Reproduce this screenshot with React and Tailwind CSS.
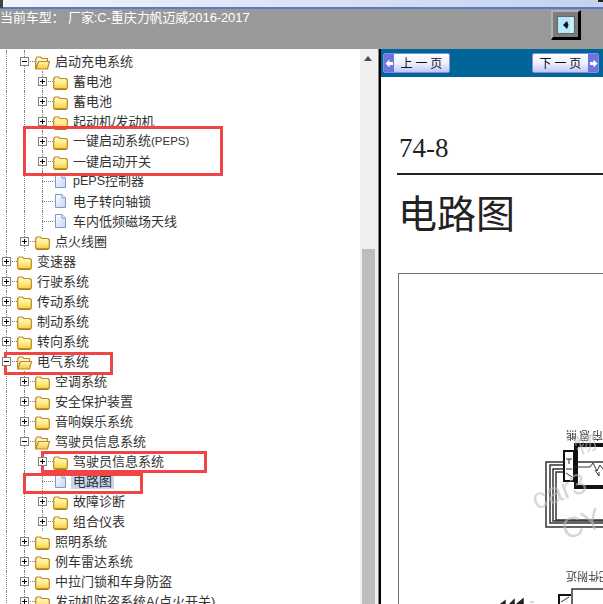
import React from "react";

const cjk = "font-['Liberation_Sans','Noto_Sans_CJK_SC',sans-serif]";

const rows = [
    { level: 1, kind: "doc", text: "" },
    { level: 1, kind: "open", text: "启动充电系统" },
    { level: 2, kind: "closed", text: "蓄电池" },
    { level: 2, kind: "closed", text: "蓄电池" },
    { level: 2, kind: "closed", text: "起动机/发动机" },
    { level: 2, kind: "closed", text: "一键启动系统", small: "(PEPS)" },
    { level: 2, kind: "closed", text: "一键启动开关" },
    { level: 2, kind: "doc", lead: "pEPS", text: "控制器" },
    { level: 2, kind: "doc", text: "电子转向轴锁" },
    { level: 2, kind: "doc", text: "车内低频磁场天线" },
    { level: 1, kind: "closed", text: "点火线圈" },
    { level: 0, kind: "closed", text: "变速器" },
    { level: 0, kind: "closed", text: "行驶系统" },
    { level: 0, kind: "closed", text: "传动系统" },
    { level: 0, kind: "closed", text: "制动系统" },
    { level: 0, kind: "closed", text: "转向系统" },
    { level: 0, kind: "open", text: "电气系统" },
    { level: 1, kind: "closed", text: "空调系统" },
    { level: 1, kind: "closed", text: "安全保护装置" },
    { level: 1, kind: "closed", text: "音响娱乐系统" },
    { level: 1, kind: "open", text: "驾驶员信息系统" },
    { level: 2, kind: "closed", text: "驾驶员信息系统" },
    { level: 2, kind: "doc", text: "电路图", selected: true },
    { level: 2, kind: "closed", text: "故障诊断" },
    { level: 2, kind: "closed", text: "组合仪表" },
    { level: 1, kind: "closed", text: "照明系统" },
    { level: 1, kind: "closed", text: "例车雷达系统" },
    { level: 1, kind: "closed", text: "中拉门锁和车身防盗" },
    { level: 1, kind: "closed", text: "发动机防盗系统A(点火开关)" },
];

function FolderClosed() {
    return (
        <svg width="15" height="14" viewBox="0 0 15 14" className="mt-[3px] shrink-0">
            <defs>
                <linearGradient id="fc" x1="0" y1="0" x2="0" y2="1">
                    <stop offset="0" stopColor="#fff9cf" />
                    <stop offset="0.5" stopColor="#ffeb8a" />
                    <stop offset="1" stopColor="#f8c83c" />
                </linearGradient>
            </defs>
            <path d="M0.7 2.5 L2 1 H5.5 L7 2.5 H13 L14.3 3.8 V12 L13 13.3 H2 L0.7 12 Z" fill="url(#fc)" stroke="#bd8a1c" strokeWidth="1.2" />
            <path d="M2 13 H13" stroke="#9c6f10" />
        </svg>
    );
}

function FolderOpen() {
    return (
        <svg width="15" height="14" viewBox="0 0 15 14" className="mt-[3px] shrink-0">
            <defs>
                <linearGradient id="fo" x1="0" y1="0" x2="0" y2="1">
                    <stop offset="0" stopColor="#fff6c0" />
                    <stop offset="1" stopColor="#f8c83c" />
                </linearGradient>
            </defs>
            <path d="M0.7 3 L2 1 H5.5 L7 2.5 H12.5 V6 H4 L0.7 12.5 Z" fill="#fbf3d0" stroke="#bd8a1c" strokeWidth="1.2" />
            <path d="M0.7 13 L3.5 5.5 H14.5 L12.5 13 Z" fill="url(#fo)" stroke="#bd8a1c" strokeWidth="1.2" />
        </svg>
    );
}

function DocIcon() {
    return (
        <svg width="15" height="16" viewBox="0 0 15 16" className="shrink-0">
            <defs>
                <linearGradient id="dc" x1="0" y1="0" x2="1" y2="1">
                    <stop offset="0" stopColor="#ffffff" />
                    <stop offset="1" stopColor="#c4d4f2" />
                </linearGradient>
            </defs>
            <path d="M2.5 1.5 H9 L12.5 5 V14.5 H2.5 Z" fill="url(#dc)" stroke="#7f9ad0" />
            <path d="M9 1.5 V5 H12.5" fill="#e8eefa" stroke="#7f9ad0" />
        </svg>
    );
}

function Expander({ open }) {
    return (
        <span className="relative z-10 flex h-[9px] w-[9px] items-center justify-center border border-[#808080] bg-white">
            <span className="absolute h-px w-[5px] bg-black" />
            {!open && <span className="absolute h-[5px] w-px bg-black" />}
        </span>
    );
}

function Guide() {
    return (
        <span className="relative h-5 w-[18px] shrink-0">
            <span className="absolute bottom-0 left-[9px] top-0 border-l border-dotted border-[#808080]" />
        </span>
    );
}

function TreeRow({ row }) {
    const guides = [];
    for (let i = 0; i < row.level; i++) guides.push(<Guide key={i} />);

    return (
        <div className="flex h-5 shrink-0 items-center whitespace-nowrap">
            {guides}
            <span className="relative flex h-5 w-[18px] shrink-0 items-center justify-center pl-px">
                <span className="absolute bottom-0 left-[9px] top-0 border-l border-dotted border-[#808080]" />
                <span className="absolute left-[9px] right-[-2px] top-[10px] border-t border-dotted border-[#808080]" />
                {row.kind !== "doc" && <Expander open={row.kind === "open"} />}
            </span>
            <span className="ml-[2px] flex w-[15px] shrink-0 justify-center">
                {row.kind === "closed" && <FolderClosed />}
                {row.kind === "open" && <FolderOpen />}
                {row.kind === "doc" && <DocIcon />}
            </span>
            <span className={`ml-[3px] px-[2px] text-[13px] leading-[15px] text-[#333] ${row.selected ? "bg-[#c8d6ee]" : ""}`}>
                {row.lead && <span className="text-[12.5px]">{row.lead}</span>}
                {row.text}
                {row.small && <span className="text-[11.5px]">{row.small}</span>}
            </span>
        </div>
    );
}

function PageButton({ text, next }) {
    return (
        <button className={`flex h-5 w-[67px] items-center rounded-[2px] border border-[#8a8ae0] bg-gradient-to-b from-white via-[#eef0ff] to-[#c4c8f4] text-[12px] text-[#111] ${next ? "flex-row-reverse" : ""}`}>
            <span className="flex h-full w-[10px] shrink-0 items-center justify-center bg-[#6d74e0]">
                <svg width="9" height="9" viewBox="0 0 9 9">
                    <path d={next ? "M1 3 H4.5 V0.5 L8.5 4.5 L4.5 8.5 V6 H1 Z" : "M8 3 H4.5 V0.5 L0.5 4.5 L4.5 8.5 V6 H8 Z"} fill="white" />
                </svg>
            </span>
            <span className="flex-1 text-center font-['Noto_Sans_CJK_SC',sans-serif] tracking-[0.1px]">{text}</span>
        </button>
    );
}

function Diagram() {
    return (
        <svg className="absolute left-0 top-0 blur-[0.4px]" width="205" height="331" viewBox="398 273 205 331">
            <g fill="none" stroke="#333">
                <path d="M603 462 H546 V527 H603" strokeWidth="1.5" />
                <path d="M563 465 H550 V523 H603" strokeWidth="1.5" />
                <path d="M563 469 H553 V521 H603" strokeWidth="1.5" />
                <path d="M563 472 H556 V520 H603" strokeWidth="1.5" />
                <rect x="564" y="451" width="10" height="30" fill="white" strokeWidth="2" stroke="#111" />
                <path d="M603 445 H576 V487 H603" strokeWidth="4" stroke="#111" />
                <path d="M574 467 H590 L593 463 L597 471 L600 465 L603 469" strokeWidth="1" />
                <path d="M595 470 L599 476 M599 476 V472" strokeWidth="1" />
                <path d="M566 459 H572 M569 459 V464 M566 469 H572 M566 473 L572 477" strokeWidth="1" />
                <path d="M603 589 H572 V604" strokeWidth="1.5" />
                <path d="M559 604 V595 H571" strokeWidth="2" stroke="#111" />
                <path d="M561 602 L569 597" strokeWidth="1" />
            </g>
            <path d="M501 604 L505 601 V604 Z M510 604 L514 600 V604 Z M517 604 L523 599 V604 Z" fill="#222" stroke="#222" strokeWidth="1.5" />
            <path d="M530 602 H534" stroke="#aaa" />
            <g className="font-['Noto_Sans_CJK_SC',sans-serif]" fill="#333" fontSize="11">
                <text x="0" y="0" transform="translate(603 431) rotate(180)" letterSpacing="2">帘恩熊</text>
                <text x="0" y="0" transform="translate(610 572) rotate(180)">配件附近</text>
            </g>
            <g className="font-['Liberation_Sans',sans-serif]" fill="#bbb" opacity="0.6">
                <text x="536" y="510" fontSize="29" transform="rotate(-20 536 510)">car3</text>
                <text x="566" y="540" fontSize="29" transform="rotate(-20 566 540)">CY</text>
                <text x="578" y="455" fontSize="22" transform="rotate(-20 578 455)" className="font-['Noto_Sans_CJK_SC',sans-serif]">物</text>
            </g>
        </svg>
    );
}

export default function App() {
    return (
        <div className={`relative flex h-[604px] w-[603px] flex-col overflow-hidden bg-white ${cjk}`}>
            {/* title strip */}
            <div className="h-[7px] shrink-0 bg-gradient-to-r from-[#f2f4fb] to-[#c5d2ef]" />
            <div className="h-[2px] shrink-0 bg-[#5b78c9]" />

            {/* gray header */}
            <div className="flex h-10 shrink-0 items-start justify-between bg-[#999999] pr-[22px]">
                <span className="whitespace-pre text-[13px] leading-[17px] tracking-[-0.1px] text-white">当前车型： 厂家:C-重庆力帆迈威2016-2017</span>
                <button className="mt-px flex h-[30px] w-[30px] items-center justify-center border-2 border-b-[3px] border-r-[3px] border-[#b0b0b0] border-b-black border-r-black bg-[#7c7c7c]">
                    <svg width="18" height="18" viewBox="0 0 18 18">
                        <rect x="0.5" y="0.5" width="17" height="17" fill="#b4e8ff" stroke="#666" />
                        <path d="M6 9 L10 5 V13 Z M10 5 L11.5 9 L10 13 Z" fill="#111" />
                        <path d="M14.5 1 V17" stroke="#f0f0f0" strokeWidth="1.5" />
                    </svg>
                </button>
            </div>

            <div className="flex min-h-0 flex-1">
                {/* tree */}
                <div className="flex w-[360px] shrink-0 flex-col overflow-hidden">
                    <div className="ml-[-3px] mt-[-18px] flex flex-col">
                        {rows.map((row, i) => (
                            <TreeRow key={i} row={row} />
                        ))}
                    </div>
                </div>

                {/* scrollbar */}
                <div className="flex w-[18px] shrink-0 flex-col items-center bg-[#f0f0f0] pr-[2px]">
                    <svg width="8" height="5" viewBox="0 0 8 5" className="mt-[7px] shrink-0">
                        <path d="M4 0 L8 5 H0 Z" fill="#505050" />
                    </svg>
                    <div className="flex-1" />
                    <div className="h-[355px] w-[13px] shrink-0 bg-[#bdbdbd]" />
                </div>
                <div className="w-[3px] shrink-0 border-r-2 border-black bg-[#808080]" />

                {/* document */}
                <div className="flex min-w-0 flex-1 flex-col overflow-hidden">
                    <div className="flex h-7 shrink-0 items-center justify-between bg-[#006699] pl-[2px] pr-1">
                        <PageButton text="上 一 页" />
                        <PageButton text="下 一 页" next />
                    </div>
                    <div className="flex flex-1 flex-col pl-[17px]">
                        <div className="mt-[52px] pl-px font-['Liberation_Serif',serif] text-[27px] leading-[38px] text-[#222]">74-8</div>
                        <div className="ml-[-1px] mt-[6px] h-[2px] bg-[#222]" />
                        <div className="mt-[11px] font-['Noto_Sans_CJK_SC',sans-serif] text-[39px] leading-[50px] text-[#222]">电路图</div>
                        <div className="relative mt-[37px] flex-1 border-l border-t border-[#707070]">
                            <div className="absolute left-[-1px] top-[-1px]">
                                <Diagram />
                            </div>
                        </div>
                    </div>
                </div>
            </div>

            {/* red marks drawn over the screenshot */}
            <div className="absolute left-[23px] top-[126px] h-[50px] w-[200px] border-[3px] border-[#f14545]" />
            <div className="absolute left-[4px] top-[352px] h-[23px] w-[109px] border-[3px] border-[#f14545]" />
            <div className="absolute left-[41px] top-[451px] h-[22px] w-[166px] border-[3px] border-[#f14545]" />
            <div className="absolute left-[23px] top-[473px] h-[21px] w-[120px] border-[3px] border-[#f14545]" />

            {/* corner notch of the window behind */}
            <div className="absolute left-0 top-0 h-2 w-[3px] bg-[#444]" />
            <div className="absolute right-0 top-0 h-[2px] w-[5px] bg-[#222]" />
        </div>
    );
}
